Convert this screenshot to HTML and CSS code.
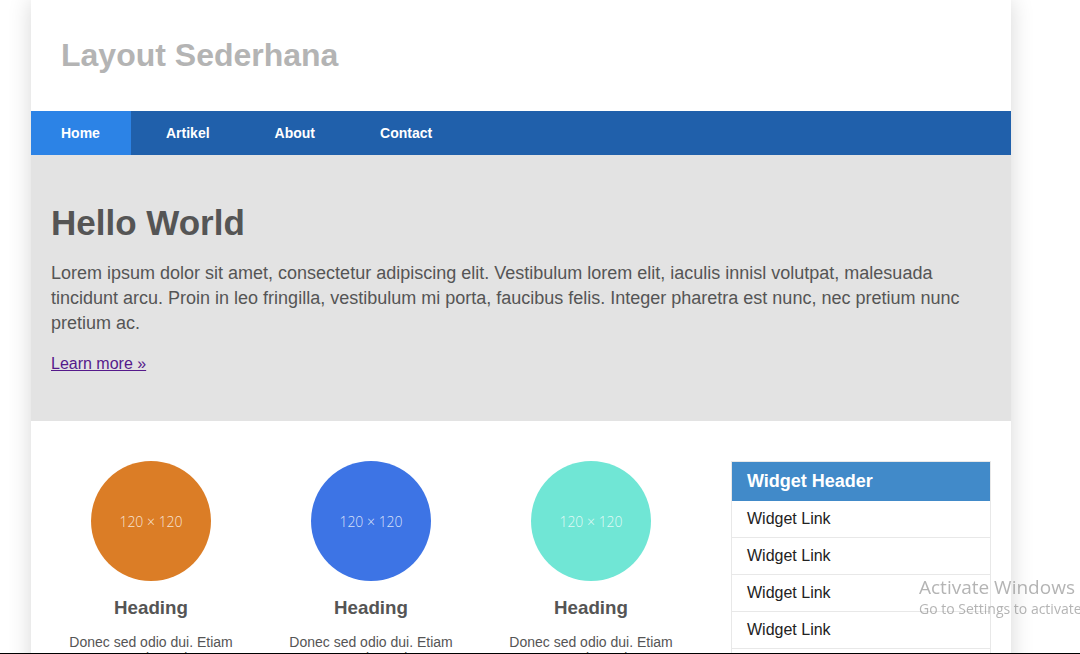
FILE: index.html
```html
<!DOCTYPE html>
<html lang="id">
<head>
<meta charset="utf-8">
<title>Layout Sederhana</title>
<link rel="stylesheet" href="styles.css">
</head>
<body>
<div class="page">
  <header class="site-header">
    <h1 class="site-title">Layout Sederhana</h1>
  </header>
  <nav class="menu">
    <a class="menu-item active" href="#">Home</a>
    <a class="menu-item" href="#">Artikel</a>
    <a class="menu-item" href="#">About</a>
    <a class="menu-item" href="#">Contact</a>
  </nav>
  <section class="hero">
    <h1 class="hero-title">Hello World</h1>
    <p class="hero-text">Lorem ipsum dolor sit amet, consectetur adipiscing elit. Vestibulum lorem elit, iaculis innisl volutpat, malesuada tincidunt arcu. Proin in leo fringilla, vestibulum mi porta, faucibus felis. Integer pharetra est nunc, nec pretium nunc pretium ac.</p>
    <p class="hero-link"><a href="#">Learn more &raquo;</a></p>
  </section>
  <section class="content">
    <div class="cols">
      <div class="col">
        <div class="circle orange">120 &times; 120</div>
        <h3 class="col-title">Heading</h3>
        <p class="col-text">Donec sed odio dui. Etiam porta sem malesuada magna mollis euismod.</p>
      </div>
      <div class="col">
        <div class="circle blue">120 &times; 120</div>
        <h3 class="col-title">Heading</h3>
        <p class="col-text">Donec sed odio dui. Etiam porta sem malesuada magna mollis euismod.</p>
      </div>
      <div class="col">
        <div class="circle teal">120 &times; 120</div>
        <h3 class="col-title">Heading</h3>
        <p class="col-text">Donec sed odio dui. Etiam porta sem malesuada magna mollis euismod.</p>
      </div>
    </div>
    <aside class="widget">
      <div class="widget-header">Widget Header</div>
      <a class="widget-link" href="#">Widget Link</a>
      <a class="widget-link" href="#">Widget Link</a>
      <a class="widget-link" href="#">Widget Link</a>
      <a class="widget-link" href="#">Widget Link</a>
      <a class="widget-link" href="#">Widget Link</a>
    </aside>
  </section>
</div>
<div class="activate">
  <div class="activate-title">Activate Windows</div>
  <div class="activate-sub">Go to Settings to activate Windows.</div>
</div>
<div class="bottom-edge"></div>
</body>
</html>
```
FILE: styles.css
```css
html, body {
  margin: 0;
  padding: 0;
  height: 100%;
  overflow: hidden;
  background: #ffffff;
}
body {
  font-family: "Liberation Sans", Arial, sans-serif;
  color: #555555;
}
.page {
  width: 980px;
  margin-left: 31px;
  background: #ffffff;
  box-shadow: 0 0 22px rgba(0, 0, 0, 0.16);
  min-height: 1200px;
}
.site-header {
  height: 111px;
  display: flex;
  align-items: center;
  padding: 0 30px;
}
.site-title {
  margin: 0;
  font-size: 32px;
  font-weight: bold;
  color: #b4b4b4;
}
.menu {
  display: flex;
  gap: 5px;
  height: 44px;
  background: #2060ab;
}
.menu-item {
  display: flex;
  align-items: center;
  padding: 0 30px;
  font-size: 14px;
  font-weight: bold;
  color: #ffffff;
  text-decoration: none;
}
.menu-item.active {
  background: #2c83e6;
  min-width: 40px;
}
.hero {
  background: #e3e3e3;
  padding: 25px 20px 30px;
  line-height: 1.4;
}
.hero-title {
  margin: 22.5px 0 18.5px;
  font-size: 35px;
  line-height: 40px;
  color: #555555;
}
.hero-text {
  margin: 0 0 17px;
  font-size: 18px;
  line-height: 25px;
}
.hero-link {
  margin: 0 0 16px;
  font-size: 16px;
  line-height: 22px;
}
.hero-link a {
  color: #551a8b;
}
.content {
  display: flex;
  padding: 40px 20px 0 10px;
}
.cols {
  display: flex;
}
.col {
  width: 220px;
  box-sizing: border-box;
  padding: 0 15px;
  text-align: center;
}
.circle {
  width: 120px;
  height: 120px;
  border-radius: 50%;
  margin: 0 auto;
  display: flex;
  align-items: center;
  justify-content: center;
  font-family: "Open Sans", sans-serif;
  font-weight: 300;
  font-size: 14px;
  color: rgba(255, 255, 255, 0.8);
}
.orange { background: #db7d26; }
.blue { background: #3d74e5; }
.teal { background: #70e6d5; }
.col-title {
  margin: 16px 0 15px;
  font-size: 18.72px;
  line-height: 21.5px;
  color: #555555;
}
.col-text {
  margin: 0;
  font-size: 14px;
  line-height: 16px;
  color: #555555;
}
.widget {
  margin-left: auto;
  width: 260px;
  border: 1px solid #e8e8e8;
  box-sizing: border-box;
  align-self: flex-start;
}
.widget-header {
  background: #418ac9;
  color: #ffffff;
  font-size: 18px;
  font-weight: bold;
  line-height: 20px;
  padding: 9px 15px 10px;
}
.widget-link {
  display: block;
  padding: 8px 15px;
  line-height: 20px;
  font-size: 16px;
  color: #222222;
  text-decoration: none;
  border-bottom: 1px solid #e8e8e8;
}
.activate {
  position: fixed;
  left: 919px;
  top: 575px;
  white-space: nowrap;
  font-family: "Open Sans", "Noto Sans", sans-serif;
  color: rgba(130, 130, 130, 0.6);
}
.activate-title {
  font-size: 19px;
  line-height: 24px;
}
.activate-sub {
  font-size: 14px;
  line-height: 20px;
}
.bottom-edge {
  position: fixed;
  left: 0;
  right: 0;
  bottom: 0;
  height: 1px;
  background: #000000;
}
```
